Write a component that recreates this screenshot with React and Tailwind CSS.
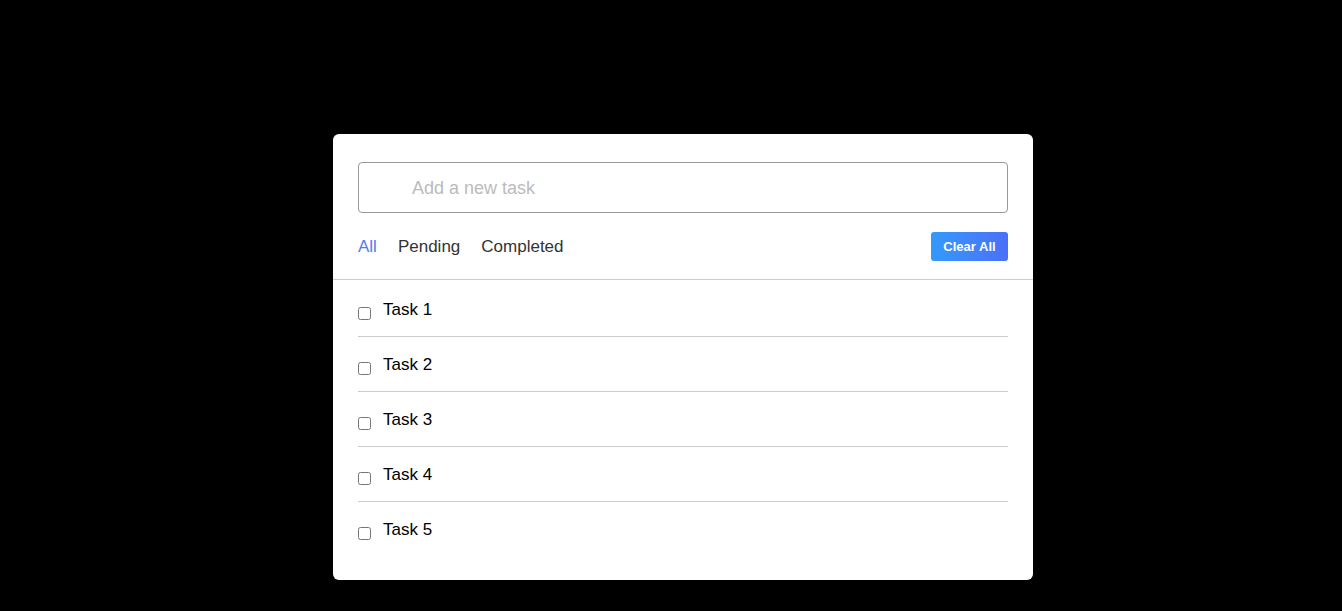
import { useState } from "react";

const filters = ["All", "Pending", "Completed"];

const TodoCard = () => {
  const [tasks, setTasks] = useState([
    { id: 1, text: "Task 1", done: false },
    { id: 2, text: "Task 2", done: false },
    { id: 3, text: "Task 3", done: false },
    { id: 4, text: "Task 4", done: false },
    { id: 5, text: "Task 5", done: false },
  ]);
  const [filter, setFilter] = useState("All");

  const toggle = (id) =>
    setTasks(tasks.map((t) => (t.id === id ? { ...t, done: !t.done } : t)));

  return (
    <div className="w-[700px] bg-white rounded-[6px] pt-[28px] pb-[23px]">
      {/* header: input + filters */}
      <div className="px-[25px] pb-[18px] border-b border-[#cccccc]">
        <input
          type="text"
          placeholder="Add a new task"
          className="w-full h-[51px] border border-[#999999] rounded-[4px] pl-[53px] pt-[2px] text-[18px] text-[#333] placeholder:text-[#bbbbbb] outline-none"
        />
        <div className="flex items-center justify-between mt-[19px]">
          <div className="flex items-center gap-[21px] text-[17px]">
            {filters.map((f) => (
              <button
                key={f}
                onClick={() => setFilter(f)}
                className={f === filter ? "text-[#4f7cf5]" : "text-[#333333]"}
              >
                {f}
              </button>
            ))}
          </div>
          <button className="h-[29px] w-[77px] rounded-[3px] bg-gradient-to-r from-[#3399fb] to-[#4a6ff8] text-white text-[13px] font-bold">
            Clear All
          </button>
        </div>
      </div>

      {/* task list */}
      <ul className="px-[25px] pt-[2px]">
        {tasks.map((t, i) => (
          <li
            key={t.id}
            className={
              "flex items-center h-[55px] pt-[2px] border-b " +
              (i < tasks.length - 1 ? "border-[#cccccc]" : "border-transparent")
            }
          >
            <input
              type="checkbox"
              checked={t.done}
              onChange={() => toggle(t.id)}
              className="w-[13px] h-[13px] mt-[7px]"
            />
            <span className="ml-[12px] text-[17px] text-black">{t.text}</span>
          </li>
        ))}
      </ul>
    </div>
  );
};

export default function App() {
  return (
    <div
      className="min-h-[611px] bg-black flex justify-center items-start pt-[134px] pl-[24px]"
      style={{ fontFamily: '"Liberation Sans", Arial, sans-serif' }}
    >
      <TodoCard />
    </div>
  );
}
